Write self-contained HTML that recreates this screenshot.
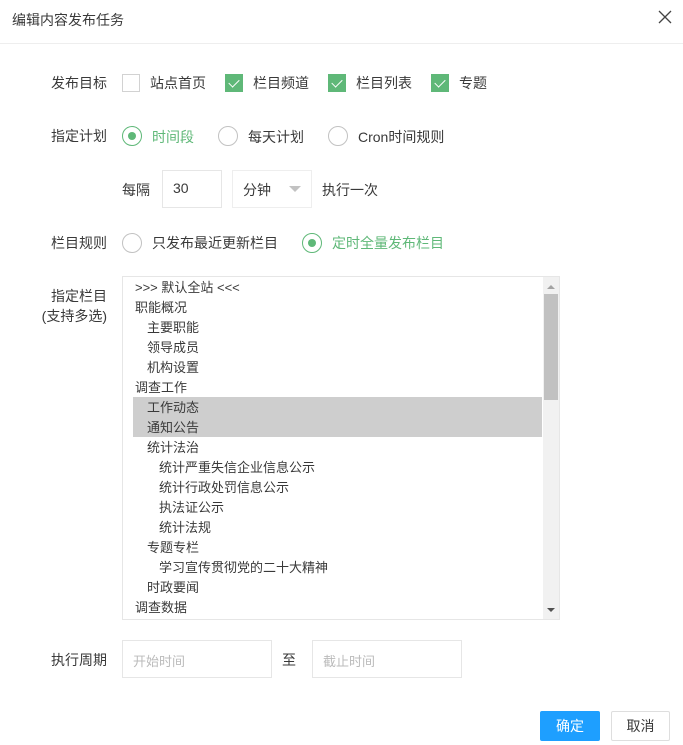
<!DOCTYPE html>
<html><head><meta charset="utf-8"><style>
*{box-sizing:border-box;margin:0;padding:0}
body{width:683px;height:745px;background:#fff;font-family:"Liberation Sans","Noto Sans CJK SC",sans-serif;font-size:14px;color:#393939;position:relative;overflow:hidden}
.a{position:absolute;white-space:nowrap}
.lbl{position:absolute;right:576px;text-align:right;line-height:20px}
.cb{position:absolute;width:18px;height:18px;border:1px solid #d2d2d2;background:#fff}
.cb.on{background:#5fb878;border-color:#5fb878}
.cb.on:after{content:"";position:absolute;left:5px;top:2px;width:5px;height:9px;border:solid #fff;border-width:0 1.5px 1.5px 0;transform:rotate(45deg)}
.rd{position:absolute;width:20px;height:20px;border:1px solid #c2c2c2;border-radius:50%}
.rd.on{border-color:#5fb878}
.rd.on:after{content:"";position:absolute;left:5px;top:5px;width:8px;height:8px;border-radius:50%;background:#5fb878}
.g{color:#5fb878}
.row{position:absolute;left:133px;width:409px;height:20px;line-height:21px;font-size:13px}
</style></head><body>
<div class="a" style="left:12px;top:10px;line-height:20px">编辑内容发布任务</div>
<svg class="a" style="left:658px;top:10px" width="14" height="14" viewBox="0 0 14 14"><path d="M1 1L13 13M13 1L1 13" stroke="#444" stroke-width="1.3" fill="none"/></svg>
<div class="a" style="left:0;top:43px;width:683px;height:1px;background:#eee"></div>

<div class="lbl" style="top:73px">发布目标</div>
<div class="cb" style="left:122px;top:74px"></div><div class="a" style="left:150px;top:73px">站点首页</div>
<div class="cb on" style="left:225px;top:74px"></div><div class="a" style="left:253px;top:73px">栏目频道</div>
<div class="cb on" style="left:328px;top:74px"></div><div class="a" style="left:356px;top:73px">栏目列表</div>
<div class="cb on" style="left:431px;top:74px"></div><div class="a" style="left:459px;top:73px">专题</div>

<div class="lbl" style="top:126px">指定计划</div>
<div class="rd on" style="left:122px;top:126px"></div><div class="a g" style="left:152px;top:127px">时间段</div>
<div class="rd" style="left:218px;top:126px"></div><div class="a" style="left:248px;top:127px">每天计划</div>
<div class="rd" style="left:328px;top:126px"></div><div class="a" style="left:358px;top:127px">Cron时间规则</div>

<div class="a" style="left:122px;top:180px">每隔</div>
<div class="a" style="left:162px;top:170px;width:60px;height:38px;border:1px solid #e6e6e6;padding:9px 10px">30</div>
<div class="a" style="left:232px;top:170px;width:80px;height:38px;border:1px solid #eee;padding:9px 10px">分钟</div>
<div class="a" style="left:289px;top:186px;border:6px solid transparent;border-top-color:#c2c2c2;border-bottom:0"></div>
<div class="a" style="left:322px;top:180px">执行一次</div>

<div class="lbl" style="top:233px">栏目规则</div>
<div class="rd" style="left:122px;top:233px"></div><div class="a" style="left:152px;top:233px">只发布最近更新栏目</div>
<div class="rd on" style="left:302px;top:233px"></div><div class="a g" style="left:332px;top:233px">定时全量发布栏目</div>

<div class="lbl" style="top:286px">指定栏目<br>(支持多选)</div>
<div class="a" style="left:122px;top:276px;width:438px;height:344px;border:1px solid #e6e6e6"></div>
<div class="a" style="left:133px;top:397px;width:409px;height:40px;background:#cecece"></div>
<div class="a" style="left:543px;top:277px;width:16px;height:342px;background:#f1f1f1"></div>
<div class="a" style="left:544px;top:294px;width:14px;height:106px;background:#c1c1c1"></div>
<div class="a" style="left:547px;top:285px;border:4px solid transparent;border-bottom-color:#a3a3a3;border-top:0"></div>
<div class="a" style="left:547px;top:608px;border:4px solid transparent;border-top-color:#505050;border-bottom:0"></div>
<div class="row" style="top:277px;padding-left:2px">&gt;&gt;&gt; 默认全站 &lt;&lt;&lt;</div>
<div class="row" style="top:297px;padding-left:2px">职能概况</div>
<div class="row" style="top:317px;padding-left:14px">主要职能</div>
<div class="row" style="top:337px;padding-left:14px">领导成员</div>
<div class="row" style="top:357px;padding-left:14px">机构设置</div>
<div class="row" style="top:377px;padding-left:2px">调查工作</div>
<div class="row" style="top:397px;padding-left:14px">工作动态</div>
<div class="row" style="top:417px;padding-left:14px">通知公告</div>
<div class="row" style="top:437px;padding-left:14px">统计法治</div>
<div class="row" style="top:457px;padding-left:26px">统计严重失信企业信息公示</div>
<div class="row" style="top:477px;padding-left:26px">统计行政处罚信息公示</div>
<div class="row" style="top:497px;padding-left:26px">执法证公示</div>
<div class="row" style="top:517px;padding-left:26px">统计法规</div>
<div class="row" style="top:537px;padding-left:14px">专题专栏</div>
<div class="row" style="top:557px;padding-left:26px">学习宣传贯彻党的二十大精神</div>
<div class="row" style="top:577px;padding-left:14px">时政要闻</div>
<div class="row" style="top:597px;padding-left:2px">调查数据</div>

<div class="lbl" style="top:650px">执行周期</div>
<div class="a" style="left:122px;top:640px;width:150px;height:38px;border:1px solid #e6e6e6;padding:10px;color:#bbb;font-size:13px">开始时间</div>
<div class="a" style="left:282px;top:650px">至</div>
<div class="a" style="left:312px;top:640px;width:150px;height:38px;border:1px solid #e6e6e6;padding:10px;color:#bbb;font-size:13px">截止时间</div>

<div class="a" style="left:540px;top:711px;width:60px;height:30px;background:#1e9fff;border-radius:2px;color:#fff;text-align:center;line-height:30px">确定</div>
<div class="a" style="left:611px;top:711px;width:59px;height:30px;border:1px solid #dedede;border-radius:2px;text-align:center;line-height:28px">取消</div>
</body></html>
